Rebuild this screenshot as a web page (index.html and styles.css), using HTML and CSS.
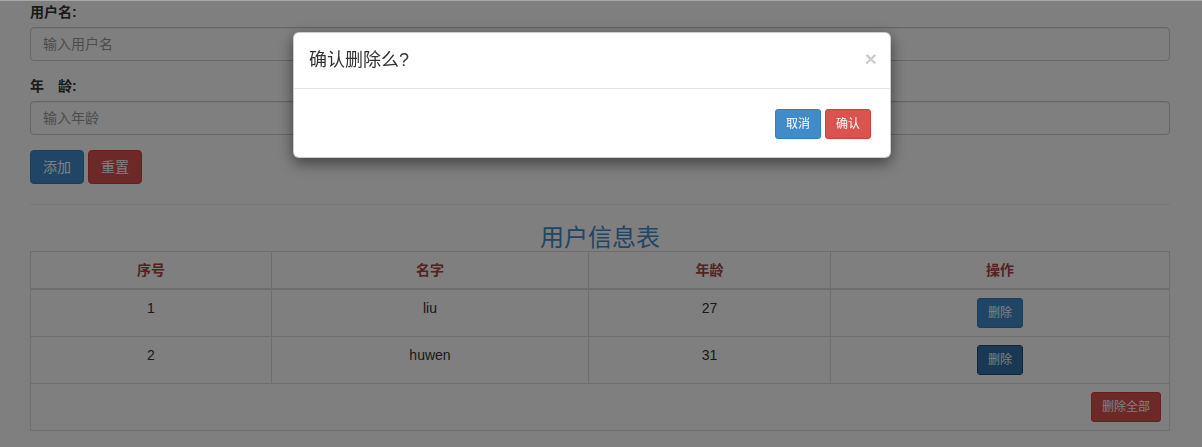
FILE: index.html
```html
<!DOCTYPE html>
<html lang="zh">
<head>
<meta charset="utf-8">
<title>用户信息</title>
<link rel="stylesheet" href="styles.css">
</head>
<body>
<div class="container">
  <form class="user-form">
    <div class="form-group">
      <label class="form-label">用户名:</label>
      <input class="form-control" type="text" placeholder="输入用户名">
    </div>
    <div class="form-group">
      <label class="form-label">年　龄:</label>
      <input class="form-control" type="text" placeholder="输入年龄">
    </div>
    <div class="form-actions">
      <button type="button" class="btn btn-primary">添加</button>
      <button type="button" class="btn btn-danger">重置</button>
    </div>
  </form>
  <hr class="divider">
  <h3 class="table-title">用户信息表</h3>
  <table class="user-table">
    <colgroup>
      <col class="col-id">
      <col class="col-name">
      <col class="col-age">
      <col class="col-op">
    </colgroup>
    <thead>
      <tr><th>序号</th><th>名字</th><th>年龄</th><th>操作</th></tr>
    </thead>
    <tbody>
      <tr><td>1</td><td>liu</td><td>27</td><td><button type="button" class="btn btn-sm btn-primary">删除</button></td></tr>
      <tr><td>2</td><td>huwen</td><td>31</td><td><button type="button" class="btn btn-sm btn-primary is-focus">删除</button></td></tr>
      <tr><td colspan="4" class="cell-right"><button type="button" class="btn btn-sm btn-danger">删除全部</button></td></tr>
    </tbody>
  </table>
</div>

<div class="top-strip"></div>
<div class="backdrop"></div>

<div class="modal">
  <div class="modal-header">
    <span class="modal-close">&times;</span>
    <h4 class="modal-title">确认删除么?</h4>
  </div>
  <div class="modal-footer">
    <button type="button" class="btn btn-sm btn-primary">取消</button>
    <button type="button" class="btn btn-sm btn-danger">确认</button>
  </div>
</div>
</body>
</html>
```

FILE: styles.css
```css
* { box-sizing: border-box; }

html, body {
  margin: 0;
  padding: 0;
  background: #fff;
}

body {
  font-family: "Liberation Sans", "Noto Sans CJK SC", sans-serif;
  font-size: 14px;
  line-height: 20px;
  color: #333;
  padding-top: 2px;
  overflow: hidden;
}

.container {
  width: 1140px;
  margin: 0 0 0 30px;
}

.form-group {
  margin-bottom: 15px;
}

.form-label {
  display: inline-block;
  font-weight: bold;
  margin-bottom: 5px;
  line-height: 20px;
}

.form-control {
  display: block;
  width: 100%;
  height: 34px;
  padding: 6px 12px;
  font-family: inherit;
  font-size: 14px;
  line-height: 20px;
  color: #555;
  background: #fff;
  border: 1px solid #ccc;
  border-radius: 4px;
  box-shadow: inset 0 1px 1px rgba(0,0,0,.075);
}

.form-control::placeholder {
  color: #999;
}

.form-actions {
  display: flex;
  gap: 4px;
}

.btn {
  display: inline-block;
  padding: 6px 12px;
  font-family: inherit;
  font-size: 14px;
  line-height: 20px;
  font-weight: normal;
  text-align: center;
  white-space: nowrap;
  border: 1px solid transparent;
  border-radius: 4px;
  color: #fff;
  cursor: pointer;
}

.btn-sm {
  padding: 5px 10px;
  font-size: 12px;
  line-height: 18px;
  border-radius: 3px;
}

.btn-primary {
  background: #428bca;
  border-color: #357ebd;
}

.btn-primary.is-focus {
  background: #3071a9;
  border-color: #1f4e77;
}

.btn-danger {
  background: #d9534f;
  border-color: #d43f3a;
}

.divider {
  margin: 20px 0;
  border: 0;
  border-top: 1px solid #eee;
}

.table-title {
  margin: 0;
  font-size: 24px;
  line-height: 26px;
  font-weight: normal;
  text-align: center;
  color: #428bca;
}

.user-table {
  width: 100%;
  table-layout: fixed;
  border-collapse: collapse;
  border: 1px solid #ddd;
}

.col-id { width: 241px; }
.col-name { width: 317px; }
.col-age { width: 242px; }

.user-table th,
.user-table td {
  padding: 8px;
  line-height: 20px;
  vertical-align: top;
  text-align: center;
  border: 1px solid #ddd;
}

.user-table th {
  color: #a94442;
  font-weight: bold;
  border-bottom-width: 2px;
}

.user-table .cell-right {
  text-align: right;
}

.top-strip {
  position: fixed;
  top: 0;
  left: 0;
  right: 0;
  height: 1px;
  background: #a8a8a8;
  z-index: 1045;
}

.backdrop {
  position: fixed;
  top: 1px;
  left: 0;
  right: 0;
  bottom: 0;
  background: #000;
  opacity: .5;
  z-index: 1040;
}

.modal {
  position: fixed;
  top: 32px;
  left: 293px;
  width: 598px;
  background: #fff;
  border: 1px solid rgba(0,0,0,.2);
  border-radius: 6px;
  box-shadow: 0 5px 15px rgba(0,0,0,.5);
  z-index: 1050;
}

.modal-header {
  padding: 15px;
  border-bottom: 1px solid #e5e5e5;
}

.modal-title {
  margin: 0;
  font-size: 18px;
  line-height: 25px;
  font-weight: normal;
  color: #333;
}

.modal-close {
  float: right;
  margin-top: -2px;
  margin-right: -2px;
  font-size: 21px;
  font-weight: bold;
  line-height: 26px;
  color: #000;
  opacity: .2;
}

.modal-footer {
  display: flex;
  justify-content: flex-end;
  gap: 4px;
  padding: 20px 19px 18px 20px;
}
```
